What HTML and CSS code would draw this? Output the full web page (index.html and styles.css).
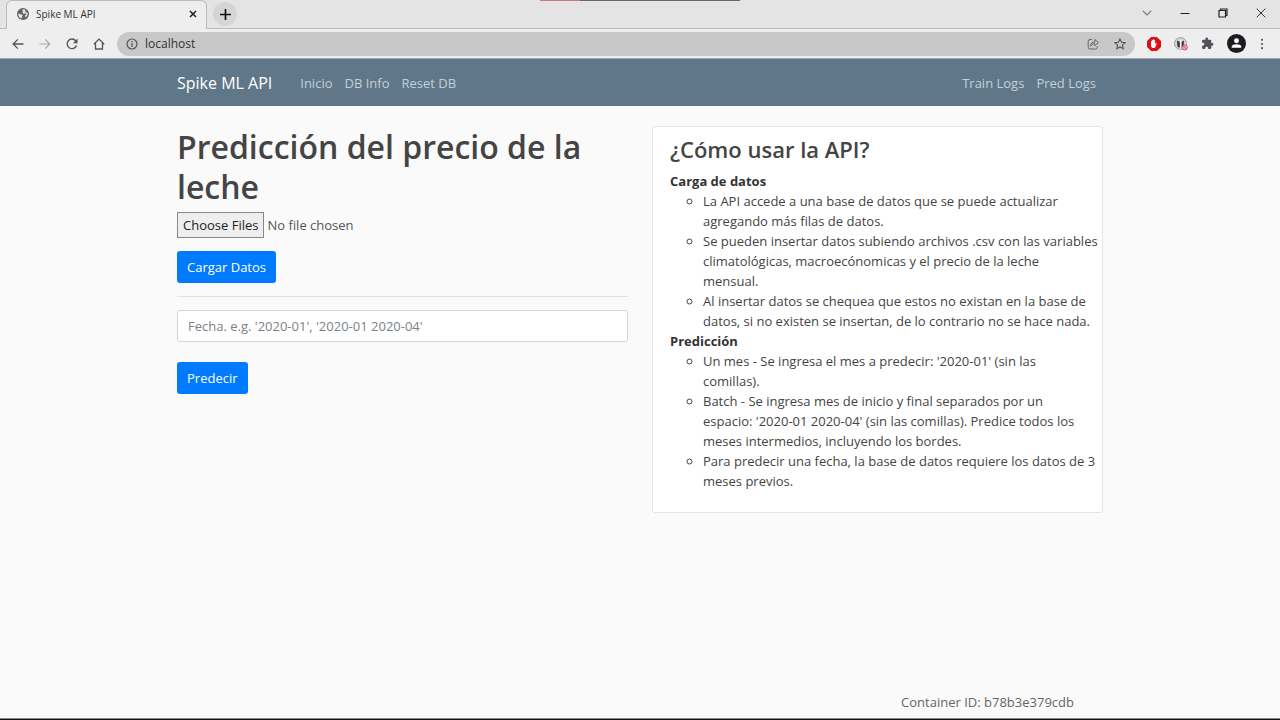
FILE: index.html
```html
<!DOCTYPE html>
<html lang="es">
<head>
<meta charset="utf-8">
<meta name="viewport" content="width=device-width, initial-scale=1">
<title>Spike ML API</title>
<link rel="stylesheet" href="styles.css">
</head>
<body>
<div class="browser">
  <div class="screen-edge"></div>
  <div class="tabstrip">
    <div class="tab">
      <svg class="favicon" width="12" height="12" viewBox="0 0 12 12"><circle cx="6" cy="6" r="6" fill="#5f6368"/><path d="M1.3 5.2 3 6.3l2 .2.8 1.2-1 1-.2 1.8C2.500 10 1.200 8 1.300 5.200ZM6 1.300 5.200 2.800l1 .8L5.300 5l1.500.7 1.700-.4 1 1.200L8 7.600l.3 1.800c1.700-1 2.700-2.800 2.300-4.700L8.700 4.300 8 2.700l.6-.7C7.800 1.500 7 1.300 6 1.300Z" fill="#e9e9e9"/></svg>
      <span class="tab-title">Spike ML API</span>
      <button class="tab-close" aria-label="Close tab"><svg width="8" height="8" viewBox="0 0 8 8"><path d="M1 1l6 6M7 1 1 7" stroke="#222" stroke-width="1.600"/></svg></button>
    </div>
    <button class="new-tab" aria-label="New tab"><svg width="11" height="11" viewBox="0 0 11 11"><path d="M5.500 0v11M0 5.500h11" stroke="#111" stroke-width="1.700"/></svg></button>
    <div class="window-controls">
      <button class="icon-button" aria-label="Search tabs"><svg width="10" height="10" viewBox="0 0 10 10"><path d="M.8 2.800 5 7l4.200-4.200" fill="none" stroke="#777" stroke-width="1.200"/></svg></button>
      <button class="icon-button" aria-label="Minimize"><svg width="10" height="10" viewBox="0 0 10 10"><path d="M.5 5.500h9" stroke="#222" stroke-width="1"/></svg></button>
      <button class="icon-button" aria-label="Restore"><svg width="10" height="10" viewBox="0 0 10 10"><path d="M1 2.500h6.500V9H1ZM2.500 2.500V1H9v6.500H7.500" fill="none" stroke="#222" stroke-width="1.200"/></svg></button>
      <button class="icon-button" aria-label="Close"><svg width="10" height="10" viewBox="0 0 10 10"><path d="M.7.7l8.600 8.600M9.300.7.7 9.300" stroke="#333" stroke-width="1"/></svg></button>
    </div>
  </div>
  <div class="toolbar">
    <div class="history">
      <button class="icon-button" aria-label="Back"><svg width="12" height="12" viewBox="0 0 12 12"><path d="M11.500 6H1.200M5.800 1.400 1.200 6l4.600 4.600" fill="none" stroke="#555" stroke-width="1.300"/></svg></button>
      <button class="icon-button" aria-label="Forward"><svg width="12" height="12" viewBox="0 0 12 12"><path d="M.5 6h10.300M6.200 1.400 10.800 6l-4.600 4.600" fill="none" stroke="#aaa" stroke-width="1.200"/></svg></button>
      <button class="icon-button" aria-label="Reload"><svg width="12" height="12" viewBox="0 0 12 12"><path d="M10.500 7.500A4.800 4.800 0 1 1 9.700 2.800L10.500 3.700" fill="none" stroke="#555" stroke-width="1.400"/><path d="M11.500.6v4.600H6.900Z" fill="#555"/></svg></button>
      <button class="icon-button" aria-label="Home"><svg width="12" height="12" viewBox="0 0 12 12"><path d="M.8 6.300 6 1.100l5.200 5.200M2.500 5v6h7V5" fill="none" stroke="#555" stroke-width="1.300"/></svg></button>
    </div>
    <div class="omnibox">
      <svg width="12" height="12" viewBox="0 0 12 12"><circle cx="6" cy="6" r="5" fill="none" stroke="#555" stroke-width="1.200"/><path d="M6 5.200v3.500M6 3v1.300" stroke="#555" stroke-width="1.300"/></svg>
      <input class="address" type="text" value="localhost" aria-label="Address">
      <button class="icon-button" aria-label="Share"><svg width="12" height="12" viewBox="0 0 12 12"><path d="M5 1.500H3A1.800 1.800 0 0 0 1.200 3.300v5.900A1.800 1.800 0 0 0 3 11h5.500a1.800 1.800 0 0 0 1.800-1.800V8M3.600 8.200c0-2.700 1.600-4.200 4.200-4.200V1.500l3.600 3.200-3.600 3V5.700C6 5.700 4.700 6.400 3.600 8.200Z" fill="none" stroke="#666" stroke-width="1"/></svg></button>
      <button class="icon-button" aria-label="Bookmark"><svg width="12" height="12" viewBox="0 0 12 12"><path d="m6 1 1.500 3.300 3.700.4-2.800 2.400.8 3.600L6 8.900l-3.200 1.800.8-3.600L.8 4.700l3.700-.4Z" fill="none" stroke="#555" stroke-width="1.100"/></svg></button>
    </div>
    <div class="extensions">
      <button class="icon-button" aria-label="Ad blocker"><svg width="14" height="14" viewBox="0 0 14 14"><path d="M4.100 0h5.800L14 4.100v5.800L9.900 14H4.100L0 9.900V4.100Z" fill="#e01018"/><path d="M4 6.500V4.200c0-.7.9-.7 1 0V3.300c0-.7 1-.7 1 0v-.5c0-.7 1.100-.7 1.100 0v.6c0-.7 1-.7 1 0v3.700l.7-.9c.5-.5 1.200-.2.9.5L8.500 9.700C8 10.700 7.600 11 6.700 11 4.600 11 4 9.700 4 8Z" fill="#fff"/></svg></button>
      <button class="icon-button" aria-label="Privacy extension"><svg width="14" height="14" viewBox="0 0 14 14"><circle cx="6.500" cy="6.500" r="6" fill="#d3d3d3" stroke="#888" stroke-width=".7"/><path d="M3 3.500 6 5v6L3.500 9.500ZM10 3.500 7.500 5v6l2-1.500Z" fill="#333"/><path d="M5.800 3h1.500v8H5.800Z" fill="#f5f5f5"/><circle cx="10.800" cy="10.500" r="2.500" fill="#f3b8bd" stroke="#d84b5d"/><path d="m9.200 8.900 3.200 3.200" stroke="#d84b5d"/></svg></button>
      <button class="icon-button" aria-label="Extensions"><svg width="13" height="13" viewBox="0 0 24 24"><path d="M20.500 11H19V7a2 2 0 0 0-2-2h-4V3.500a2.500 2.500 0 0 0-5 0V5H4a2 2 0 0 0-2 2v3.800h1.500a2.700 2.700 0 0 1 0 5.400H2V20a2 2 0 0 0 2 2h3.800v-1.500a2.700 2.700 0 0 1 5.400 0V22H17a2 2 0 0 0 2-2v-4h1.500a2.500 2.500 0 0 0 0-5Z" fill="#505357"/></svg></button>
      <button class="icon-button" aria-label="Profile"><svg width="19" height="19" viewBox="0 0 20 20"><circle cx="10" cy="10" r="10" fill="#1b1c1f"/><circle cx="10" cy="7.200" r="2.600" fill="#fff"/><path d="M5 14.500v-1.300c0-1.700 2.600-2.500 5-2.500s5 .8 5 2.500v1.300Z" fill="#fff"/></svg></button>
      <button class="icon-button" aria-label="Menu"><svg width="6" height="12" viewBox="0 0 6 12"><g fill="#555"><circle cx="3" cy="1.800" r="1.100"/><circle cx="3" cy="6" r="1.100"/><circle cx="3" cy="10.200" r="1.100"/></g></svg></button>
    </div>
  </div>
</div>
<header class="navbar">
  <nav class="container nav-row">
    <a class="brand" href="#">Spike ML API</a>
    <div class="nav-links">
      <a class="nav-link" href="#">Inicio</a>
      <a class="nav-link" href="#">DB Info</a>
      <a class="nav-link" href="#">Reset DB</a>
    </div>
    <div class="nav-links nav-end">
      <a class="nav-link" href="#">Train Logs</a>
      <a class="nav-link" href="#">Pred Logs</a>
    </div>
  </nav>
</header>
<main class="container content">
  <section>
    <h1 class="title">Predicción del precio de la leche</h1>
    <form class="upload">
      <input class="file-input" type="file" multiple aria-label="Archivos de datos">
      <button class="button" type="button">Cargar Datos</button>
    </form>
    <hr class="divider">
    <form class="predict">
      <input class="text-input" type="text" placeholder="Fecha. e.g. '2020-01', '2020-01 2020-04'" aria-label="Fecha">
      <button class="button" type="button">Predecir</button>
    </form>
  </section>
  <aside class="card">
    <h2 class="card-title">¿Cómo usar la API?</h2>
    <h3 class="topic">Carga de datos</h3>
    <ul class="steps">
      <li>La API accede a una base de datos que se puede actualizar agregando más filas de datos.</li>
      <li>Se pueden insertar datos subiendo archivos .csv con las variables climatológicas, macroecónomicas y el precio de la leche<br>mensual.</li>
      <li>Al insertar datos se chequea que estos no existan en la base de datos, si no existen se insertan, de lo contrario no se hace nada.</li>
    </ul>
    <h3 class="topic">Predicción</h3>
    <ul class="steps">
      <li>Un mes - Se ingresa el mes a predecir: '2020-01' (sin las<br>comillas).</li>
      <li>Batch - Se ingresa mes de inicio y final separados por un<br>espacio: '2020-01 2020-04' (sin las comillas). Predice todos los meses intermedios, incluyendo los bordes.</li>
      <li>Para predecir una fecha, la base de datos requiere los datos de 3 meses previos.</li>
    </ul>
  </aside>
</main>
<footer class="container footer">Container ID: b78b3e379cdb</footer>
<div class="taskbar-edge"></div>
</body>
</html>
```
FILE: styles.css
```css
*, *::before, *::after { box-sizing: border-box; }

body {
  display: flex;
  flex-direction: column;
  min-height: 100vh;
  margin: 0;
  background: #fafafa;
  color: #444;
  font: 13px/20px "Open Sans", "Noto Sans", sans-serif;
}

button, input { font: inherit; }
svg { display: block; flex: none; }

/* Browser window */
.browser {
  position: relative;
  background: #e4e4e4;
  border-bottom: 1px solid #9aa5b0;
}
.screen-edge {
  position: absolute;
  top: 0;
  left: 50%;
  width: 200px;
  height: 1px;
  margin-left: -100px;
  background: linear-gradient(to right, #c9777b 40px, #666 40px);
}
.tabstrip { display: flex; height: 28px; padding-left: 6px; }
.tab {
  display: flex;
  align-items: center;
  gap: 7px;
  width: 201px;
  height: 29px;
  padding: 0 9px 2px 10px;
  background: #eee;
  border: 1px solid #bbb;
  border-bottom: 0;
  border-radius: 6px 6px 0 0;
  z-index: 1;
}
.tab-title { flex: 1; color: #333; font-size: 10px; }
.tab-close, .new-tab, .icon-button {
  display: flex;
  align-items: center;
  justify-content: center;
  padding: 0;
  border: 0;
  background: none;
}
.new-tab {
  width: 24px;
  height: 24px;
  margin: 2px 0 0 6px;
  border-radius: 50%;
  background: #d5d5d5;
}
.window-controls {
  display: flex;
  gap: 28px;
  margin-left: auto;
  padding: 0 14px 3px 0;
}
.toolbar {
  display: flex;
  align-items: center;
  gap: 12px;
  height: 30px;
  padding: 0 15px 0 12px;
  background: #eee;
  border-top: 1px solid #bbb;
}
.history { display: flex; gap: 15px; }
.omnibox {
  display: flex;
  align-items: center;
  flex: 1;
  gap: 15px;
  height: 24px;
  padding: 0 9px;
  background: #c8c8c8;
  border-radius: 12px;
}
.address {
  flex: 1;
  min-width: 0;
  margin-left: -8px;
  padding: 0;
  border: 0;
  background: none;
  color: #333;
  font-size: 12px;
}
.extensions { display: flex; align-items: center; gap: 13px; }

/* Page */
.container {
  width: 100%;
  max-width: 950px;
  margin: 0 auto;
  padding: 0 12px;
}
.navbar { background: #607789; }
.nav-row { display: flex; align-items: center; min-height: 47px; }
.brand { color: #fff; font-size: 16px; text-decoration: none; }
.nav-links { display: flex; gap: 12px; margin-left: 28px; }
.nav-end { margin-left: auto; padding-right: 7px; }
.nav-link { color: #c3d0da; text-decoration: none; }

.content {
  display: grid;
  grid-template-columns: 1fr 1fr;
  gap: 24px;
  align-items: start;
  padding-top: 20px;
}
.title {
  margin: 0 0 5px;
  padding-top: 1px;
  font-size: 32px;
  font-weight: 600;
  line-height: 40px;
}
.upload, .predict {
  display: flex;
  flex-direction: column;
  align-items: flex-start;
}
.upload { gap: 13px; }
.predict { gap: 20px; }
.file-input { width: 100%; height: 26px; color: #555; }
.file-input::file-selector-button {
  height: 26px;
  margin-right: 3px;
  padding: 0 5px;
  border: 1px solid #888;
  border-radius: 0;
  background: #eee;
  color: #222;
  font: inherit;
}
.button {
  height: 32px;
  padding: 0 10px;
  border: 0;
  border-radius: 3px;
  background: #007bff;
  color: #fff;
}
.divider {
  margin: 13px 0;
  border: 0;
  border-top: 1px solid #e3e3e3;
}
.text-input {
  width: 100%;
  height: 32px;
  padding: 0 10px;
  border: 1px solid #d2d6da;
  border-radius: 3px;
  background: #fff;
}
.text-input::placeholder { color: #7b8289; }

.card {
  padding: 8px 0 21px 17px;
  background: #fff;
  border: 1px solid #e5e5e5;
  border-radius: 3px;
}
.card-title {
  margin: 0 0 8px;
  font-size: 22px;
  font-weight: 600;
  line-height: 28px;
}
.topic { margin: 0; color: #333; font-size: 13px; font-weight: 700; }
.steps { margin: 0; padding-left: 33px; list-style: circle; }

.footer { margin-top: auto; padding: 0 41px 6px; text-align: right; color: #666; }
.taskbar-edge { height: 2px; background: #111; border-top: 1px solid #888; }
```
